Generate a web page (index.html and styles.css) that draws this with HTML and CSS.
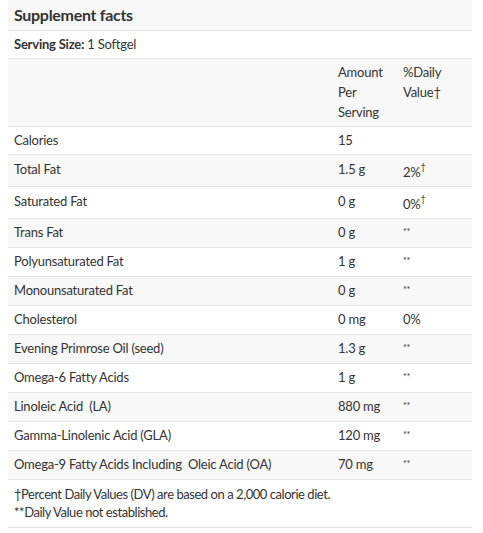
FILE: index.html
```html
<!DOCTYPE html>
<html>
<head>
<meta charset="utf-8">
<link rel="stylesheet" href="styles.css">
</head>
<body>
<table class="facts">
  <colgroup>
    <col class="c-name">
    <col class="c-amt">
    <col class="c-dv">
  </colgroup>
  <tr class="title-row"><th colspan="3" class="title">Supplement facts</th></tr>
  <tr class="serving"><td colspan="3"><b>Serving Size:</b> 1 Softgel</td></tr>
  <tr class="head"><td></td><td>Amount<br>Per<br>Serving</td><td>%Daily<br>Value†</td></tr>
  <tr class="first"><td>Calories</td><td>15</td><td></td></tr>
  <tr class="sup-row"><td>Total Fat</td><td>1.5 g</td><td class="dv">2%<sup>†</sup></td></tr>
  <tr class="sup-row"><td>Saturated Fat</td><td>0 g</td><td class="dv">0%<sup>†</sup></td></tr>
  <tr><td>Trans Fat</td><td>0 g</td><td class="star">**</td></tr>
  <tr><td>Polyunsaturated Fat</td><td>1 g</td><td class="star">**</td></tr>
  <tr><td>Monounsaturated Fat</td><td>0 g</td><td class="star">**</td></tr>
  <tr><td>Cholesterol</td><td>0 mg</td><td>0%</td></tr>
  <tr><td>Evening Primrose Oil (seed)</td><td>1.3 g</td><td class="star">**</td></tr>
  <tr><td>Omega-6 Fatty Acids</td><td>1 g</td><td class="star">**</td></tr>
  <tr><td>Linoleic Acid &nbsp;(LA)</td><td>880 mg</td><td class="star">**</td></tr>
  <tr><td>Gamma-Linolenic Acid (GLA)</td><td>120 mg</td><td class="star">**</td></tr>
  <tr><td>Omega-9 Fatty Acids Including &nbsp;Oleic Acid (OA)</td><td>70 mg</td><td class="star">**</td></tr>
  <tr class="foot"><td colspan="3">†Percent Daily Values (DV) are based on a 2,000 calorie diet.<br>**Daily Value not established.</td></tr>
</table>
</body>
</html>
```

FILE: styles.css
```css
html, body {
  margin: 0;
  padding: 0;
  background: #ffffff;
}
body {
  padding: 0 11px 0 8px;
  font-family: Lato, "Liberation Sans", sans-serif;
  font-size: 13px;
  letter-spacing: -0.22px;
  color: #333333;
}
.facts {
  width: 464px;
  border-collapse: collapse;
  table-layout: fixed;
}
.c-name { width: 324px; }
.c-amt { width: 65px; }
.c-dv { width: 75px; }
.facts td, .facts th {
  padding: 3px 6px 5px 6px;
  line-height: 20px;
  vertical-align: top;
  text-align: left;
  border-bottom: 1px solid #e3e3e3;
}
.facts tr:nth-child(odd) td,
.facts tr:nth-child(odd) th {
  background: #f8f8f8;
}
.facts .title {
  font-size: 16px;
  font-weight: 700;
  letter-spacing: -0.3px;
  padding: 5px 6px 5px 6px;
}
.serving td {
  padding: 3px 6px 4px 6px;
}
.serving b { font-weight: 700; }
.head td {
  padding: 3px 6px 4px 6px;
}
.first td {
  padding: 3px 6px 4px 6px;
}
.sup-row td {
  padding-top: 4px;
}
.dv sup {
  font-size: 9px;
  line-height: 0;
  vertical-align: 7px;
}
.sup-row .dv {
  padding-top: 7px;
  padding-bottom: 4px;
}
.star {
  font-size: 9px;
}
.foot td {
  line-height: 18px;
  letter-spacing: -0.45px;
  padding: 5px 6px 6px 6px;
  background: #ffffff !important;
}
```
